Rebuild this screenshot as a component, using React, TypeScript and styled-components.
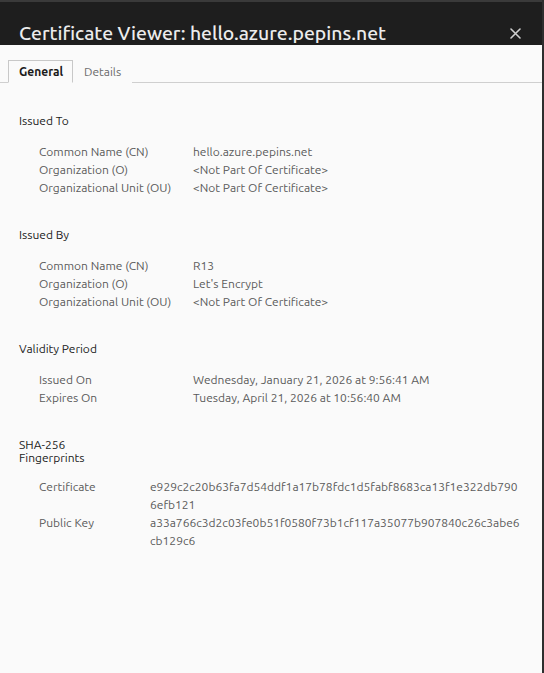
import React from "react";
import styled, { createGlobalStyle } from "styled-components";

const Global = createGlobalStyle`
  html, body { margin: 0; padding: 0; background: #fafafa; }
  * { box-sizing: border-box; }
`;

const FONT = `"Ubuntu", "Lato", "Noto Sans", sans-serif`;

const Window = styled.div`
  width: 544px;
  height: 673px;
  display: flex;
  flex-direction: column;
  background: #fafafa;
  border-right: 2px solid #2e2e2e;
  font-family: ${FONT};
  overflow: hidden;
`;

const Header = styled.header`
  height: 45px;
  border-top: 2px solid #3a3a3a;
  background: #1e1e1e;
  display: flex;
  align-items: flex-start;
  justify-content: space-between;
  padding: 20px 0 0 19px;
  position: relative;
`;

const Title = styled.h1`
  margin: 0;
  font-size: 19.4px;
  line-height: 23px;
  font-weight: 500;
  color: #ececec;
  letter-spacing: 0;
`;

const Close = styled.button`
  position: absolute;
  right: 20px;
  top: 24px;
  width: 14px;
  height: 14px;
  padding: 0;
  border: 0;
  background: none;
  display: flex;
  align-items: center;
  justify-content: center;
`;

const TabBar = styled.nav`
  display: flex;
  padding: 15px 0 0 8px;
  border-bottom: 1px solid #cfcfcf;
`;

const Tab = styled.div<{ $active?: boolean }>`
  height: 23px;
  margin-bottom: -1px;
  padding: 0 10px;
  display: flex;
  align-items: center;
  font-size: 12px;
  font-weight: ${(p) => (p.$active ? 700 : 400)};
  color: ${(p) => (p.$active ? "#1a1a1a" : "#6a6a6a")};
  background: #fafafa;
  border: 1px solid ${(p) => (p.$active ? "#c8c8c8" : "transparent")};
  border-bottom: 1px solid ${(p) => (p.$active ? "#fafafa" : "transparent")};
  width: ${(p) => (p.$active ? "65px" : "auto")};
`;

const Content = styled.main`
  padding: 29px 0 0 19px;
  display: flex;
  flex-direction: column;
  gap: 29px;
`;

const Section = styled.section<{ $gap: number }>`
  display: flex;
  flex-direction: column;
  gap: ${(p) => p.$gap}px;
`;

const Heading = styled.h2<{ $tight?: boolean }>`
  margin: 0;
  font-size: 12px;
  font-weight: 400;
  color: #1a1a1a;
  line-height: ${(p) => (p.$tight ? "13px" : "18px")};
  padding-top: ${(p) => (p.$tight ? "2px" : "0")};
`;

const Rows = styled.div<{ $labelWidth: number }>`
  display: grid;
  grid-template-columns: ${(p) => p.$labelWidth}px 1fr;
  padding-left: 20px;
  font-size: 12px;
  line-height: 18px;
  color: #5a5a5a;
`;

const Label = styled.div``;
const Value = styled.div`
  white-space: pre-line;
`;

type Row = [string, string];

const Block = ({ title, rows, labelWidth = 154, tight }: { title: React.ReactNode; rows: Row[]; labelWidth?: number; tight?: boolean }) => (
  <Section $gap={tight ? 14 : 13}>
    <Heading $tight={tight}>{title}</Heading>
    <Rows $labelWidth={labelWidth}>
      {rows.map(([l, v]) => (
        <React.Fragment key={l}>
          <Label>{l}</Label>
          <Value>{v}</Value>
        </React.Fragment>
      ))}
    </Rows>
  </Section>
);

export default function App() {
  return (
    <>
      <Global />
      <Window>
        <Header>
          <Title>Certificate Viewer: hello.azure.pepins.net</Title>
          <Close aria-label="Close">
            <svg width="11" height="11" viewBox="0 0 11 11">
              <path d="M1 1 L10 10 M10 1 L1 10" stroke="#cfcfcf" strokeWidth="1.6" strokeLinecap="round" />
            </svg>
          </Close>
        </Header>
        <TabBar>
          <Tab $active>General</Tab>
          <Tab>Details</Tab>
        </TabBar>
        <Content>
          <Block
            title="Issued To"
            rows={[
              ["Common Name (CN)", "hello.azure.pepins.net"],
              ["Organization (O)", "<Not Part Of Certificate>"],
              ["Organizational Unit (OU)", "<Not Part Of Certificate>"],
            ]}
          />
          <Block
            title="Issued By"
            rows={[
              ["Common Name (CN)", "R13"],
              ["Organization (O)", "Let's Encrypt"],
              ["Organizational Unit (OU)", "<Not Part Of Certificate>"],
            ]}
          />
          <Block
            title="Validity Period"
            rows={[
              ["Issued On", "Wednesday, January 21, 2026 at 9:56:41 AM"],
              ["Expires On", "Tuesday, April 21, 2026 at 10:56:40 AM"],
            ]}
          />
          <Block
            tight
            title={<>SHA-256<br />Fingerprints</>}
            labelWidth={111}
            rows={[
              ["Certificate", "e929c2c20b63fa7d54ddf1a17b78fdc1d5fabf8683ca13f1e322db790\n6efb121"],
              ["Public Key", "a33a766c3d2c03fe0b51f0580f73b1cf117a35077b907840c26c3abe6\ncb129c6"],
            ]}
          />
        </Content>
      </Window>
    </>
  );
}
